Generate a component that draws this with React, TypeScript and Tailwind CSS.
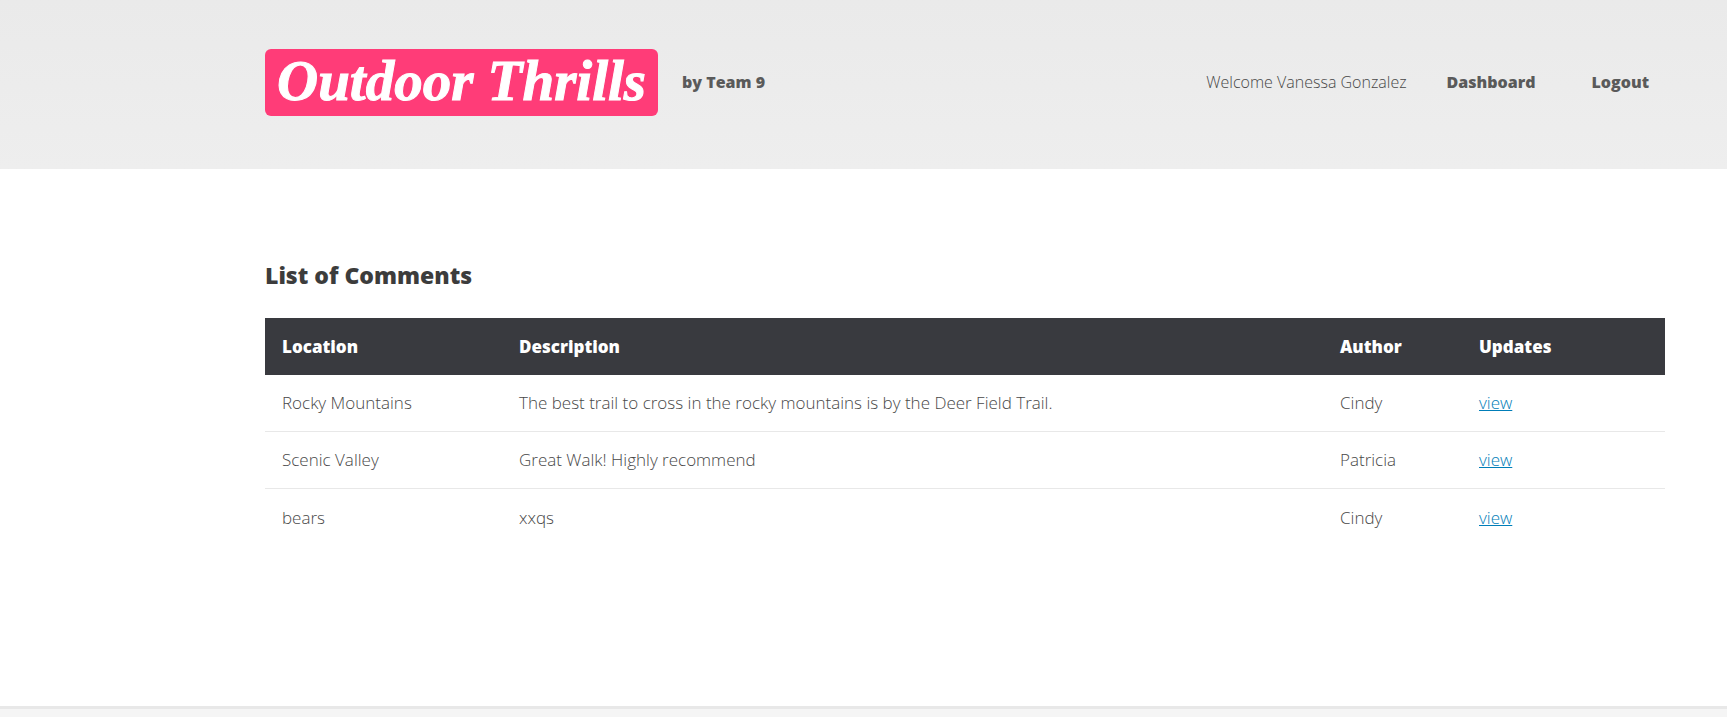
const comments = [
  { location: "Rocky Mountains", description: "The best trail to cross in the rocky mountains is by the Deer Field Trail.", author: "Cindy" },
  { location: "Scenic Valley", description: "Great Walk! Highly recommend", author: "Patricia" },
  { location: "bears", description: "xxqs", author: "Cindy" },
];

function Header() {
  return (
    <header className="bg-linear-to-b from-[#eaeaea] to-[#eeeeee] pt-[49px] pb-[53px] pl-[265px] pr-[62px]">
      <div className="flex items-center justify-between pr-4">
        <div className="flex items-center gap-6">
          <h1>
            <a
              href="#home"
              className="flex h-[67px] w-[393px] items-center justify-center rounded-md bg-[#ff3c78] pb-1 font-['Liberation_Serif',serif] text-[57px] leading-none font-bold whitespace-nowrap text-white italic [-webkit-text-stroke:1px_white]"
            >
              Outdoor Thrills
            </a>
          </h1>
          <span className="pb-0.5 text-base font-extrabold whitespace-nowrap">by Team 9</span>
        </div>
        <nav className="flex items-center pb-0.5 text-base whitespace-nowrap">
          <span className="mr-10 text-[#484848]">Welcome Vanessa Gonzalez</span>
          <a href="#dashboard" className="mr-14 font-extrabold">Dashboard</a>
          <a href="#logout" className="font-extrabold">Logout</a>
        </nav>
      </div>
    </header>
  );
}

function CommentsTable() {
  return (
    <table className="w-full table-fixed border-separate border-spacing-0 text-left text-[17px]">
      <colgroup>
        <col className="w-[237px]" />
        <col />
        <col className="w-[139px]" />
        <col className="w-[203px]" />
      </colgroup>
      <thead className="bg-[#393a3f] text-white">
        <tr className="h-[57px] *:px-[17px] *:font-extrabold">
          <th>Location</th>
          <th>Description</th>
          <th>Author</th>
          <th>Updates</th>
        </tr>
      </thead>
      <tbody className="text-[#484848]">
        {comments.map((c) => (
          <tr key={c.location} className="h-[57px] *:border-b *:border-[#e8e8e8] *:px-[17px] last:*:border-b-0">
            <td>{c.location}</td>
            <td>{c.description}</td>
            <td>{c.author}</td>
            <td>
              <a href={`#${encodeURIComponent(c.location)}`} className="text-[#007db8] underline">view</a>
            </td>
          </tr>
        ))}
      </tbody>
    </table>
  );
}

export default function App() {
  return (
    <div className="flex min-h-screen flex-col bg-white font-['Open_Sans',sans-serif] font-light text-[#5a5a5a]">
      <Header />
      <main className="pt-[88px] pr-[62px] pb-[160px] pl-[265px]">
        <h2 className="mb-6 text-[23px] leading-[37px] font-extrabold text-[#3c3c3c]">List of Comments</h2>
        <CommentsTable />
      </main>
      <footer className="grow border-t-3 border-[#e8e8e8] bg-[#f5f5f5]" />
    </div>
  );
}
